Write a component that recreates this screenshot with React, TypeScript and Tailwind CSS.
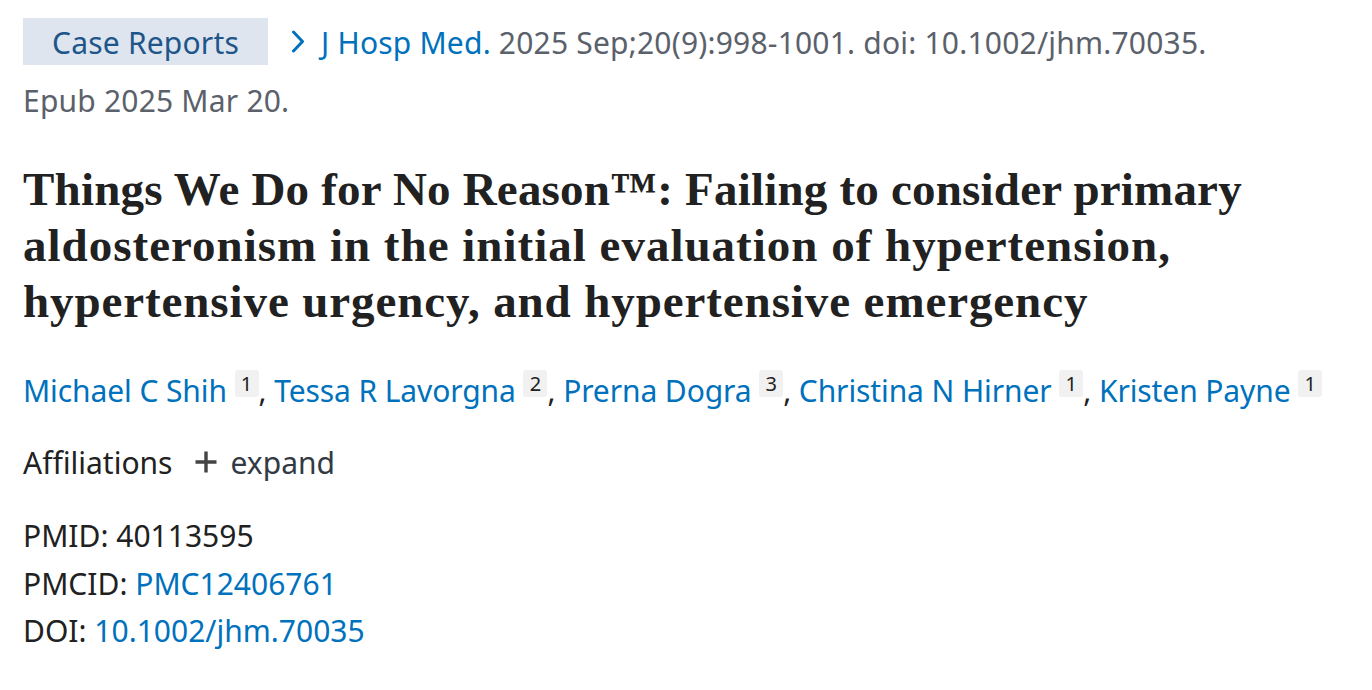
import React from "react";

const authors: { name: string; aff: string }[] = [
  { name: "Michael C Shih", aff: "1" },
  { name: "Tessa R Lavorgna", aff: "2" },
  { name: "Prerna Dogra", aff: "3" },
  { name: "Christina N Hirner", aff: "1" },
  { name: "Kristen Payne", aff: "1" },
];

export default function App() {
  return (
    <div className="min-h-[690px] bg-white pl-[23px] pt-[18px] font-['Noto_Sans',sans-serif] text-[30px] tracking-[0.2px] text-[#212121]">
      {/* citation row */}
      <div className="flex h-[47px] items-center">
        <span className="flex h-[47px] items-center bg-[#dee5ef] px-[29px] pt-[2px] text-[#20558a]">
          Case Reports
        </span>
        <svg className="ml-[23px] mr-[16px]" width="14" height="23" viewBox="0 0 14 23" fill="none">
          <polyline points="2.5,2 11.5,11.5 2.5,21" stroke="#0071bc" strokeWidth="3" strokeLinecap="round" strokeLinejoin="round" />
        </svg>
        <span className="pt-[2px] whitespace-nowrap text-[#5b616b]">
          <span className="text-[#0071bc]">J Hosp Med.</span> 2025 Sep;20(9):998-1001. doi: 10.1002/jhm.70035.
        </span>
      </div>
      <div className="mt-[15px] leading-[42px] text-[#5b616b]">Epub 2025 Mar 20.</div>

      {/* title */}
      <h1 className="mt-[39px] font-['Liberation_Serif',serif] text-[47px] font-bold leading-[56px] text-[#212121]">
        <span className="tracking-[0.2px]">Things We Do for No Reason™: Failing to consider primary</span>
        <br />
        <span className="tracking-[1px]">aldosteronism in the initial evaluation of hypertension,</span>
        <br />
        <span className="tracking-[0.9px]">hypertensive urgency, and hypertensive emergency</span>
      </h1>

      {/* authors */}
      <div className="mt-[41px] leading-[42px] whitespace-nowrap tracking-[-0.1px]">
        {authors.map((a, i) => (
          <span key={a.name}>
            <span className="text-[#0071bc]">{a.name}</span>{" "}
            <span className="inline-block h-[27px] w-[24px] rounded-[3px] bg-[#f1f1f1] text-center align-top text-[20px] leading-[27px] tracking-normal text-[#212121]">
              {a.aff}
            </span>
            {i < authors.length - 1 ? <span className="text-[#212121]">, </span> : null}
          </span>
        ))}
      </div>

      {/* affiliations */}
      <div className="mt-[29px] flex h-[42px] items-center tracking-normal">
        <span className="text-[#212121]">Affiliations</span>
        <svg className="ml-[22px] mr-[14px]" width="22" height="22" viewBox="0 0 22 22">
          <path d="M11 0.5v21M0.5 11h21" stroke="#444" strokeWidth="3.4" />
        </svg>
        <span className="text-[#323a45]">expand</span>
      </div>

      {/* identifiers */}
      <div className="mt-[29px] leading-[47.5px] tracking-normal">
        <div>
          PMID: <span>40113595</span>
        </div>
        <div>
          PMCID: <span className="text-[#0071bc]">PMC12406761</span>
        </div>
        <div>
          DOI: <span className="text-[#0071bc]">10.1002/jhm.70035</span>
        </div>
      </div>
    </div>
  );
}
